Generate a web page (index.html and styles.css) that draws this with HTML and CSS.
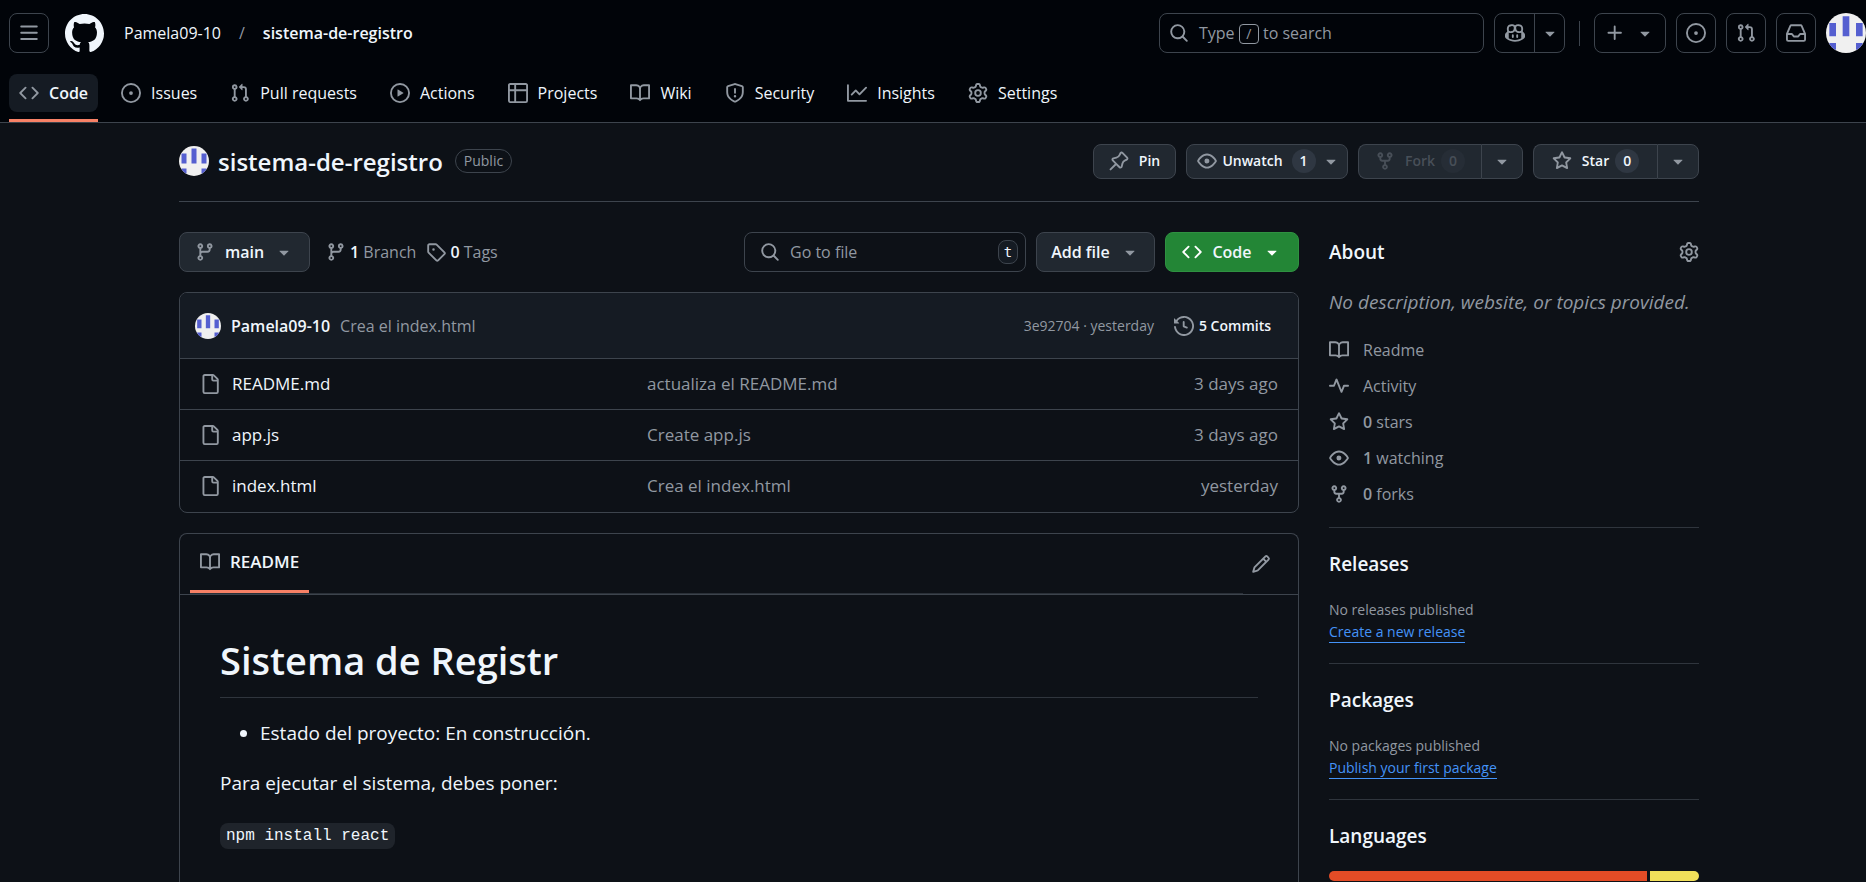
FILE: index.html
```html
<!DOCTYPE html>
<html lang="en">
<head>
<meta charset="utf-8">
<title>Pamela09-10/sistema-de-registro</title>
<link rel="stylesheet" href="styles.css">
</head>
<body>
<svg class="sprite" aria-hidden="true">
  <symbol id="bars" viewBox="0 0 16 16"><path d="M1 2.75A.75.75 0 0 1 1.75 2h12.5a.75.75 0 0 1 0 1.5H1.75A.75.75 0 0 1 1 2.75Zm0 5A.75.75 0 0 1 1.75 7h12.5a.75.75 0 0 1 0 1.5H1.75A.75.75 0 0 1 1 7.75ZM1.75 12h12.5a.75.75 0 0 1 0 1.5H1.75a.75.75 0 0 1 0-1.5Z"/></symbol>
  <symbol id="mark" viewBox="0 0 16 16"><path d="M8 0c4.42 0 8 3.58 8 8a8.013 8.013 0 0 1-5.45 7.59c-.4.08-.55-.17-.55-.38 0-.27.01-1.13.01-2.2 0-.75-.25-1.23-.54-1.48 1.78-.2 3.65-.88 3.65-3.95 0-.88-.31-1.59-.82-2.15.08-.2.36-1.02-.08-2.12 0 0-.67-.22-2.2.82-.64-.18-1.32-.27-2-.27-.68 0-1.36.09-2 .27-1.53-1.03-2.2-.82-2.2-.82-.44 1.1-.16 1.92-.08 2.12-.51.56-.82 1.28-.82 2.15 0 3.06 1.86 3.75 3.64 3.95-.23.2-.44.55-.51 1.07-.46.21-1.61.55-2.33-.66-.15-.24-.6-.83-1.23-.82-.67.01-.27.38.01.53.34.19.73.9.82 1.13.16.45.68 1.31 2.69.94 0 .67.01 1.3.01 1.49 0 .21-.15.45-.55.38A7.995 7.995 0 0 1 0 8c0-4.42 3.58-8 8-8Z"/></symbol>
  <symbol id="code" viewBox="0 0 16 16"><path d="m11.28 3.22 4.25 4.25a.75.75 0 0 1 0 1.06l-4.25 4.25a.749.749 0 0 1-1.275-.326.749.749 0 0 1 .215-.734L13.94 8l-3.72-3.72a.749.749 0 0 1 .326-1.275.749.749 0 0 1 .734.215Zm-6.56 0a.751.751 0 0 1 1.042.018.751.751 0 0 1 .018 1.042L2.06 8l3.72 3.72a.749.749 0 0 1-.326 1.275.749.749 0 0 1-.734-.215L.47 8.53a.75.75 0 0 1 0-1.06Z"/></symbol>
  <symbol id="issue" viewBox="0 0 16 16"><path d="M8 9.5a1.5 1.5 0 1 0 0-3 1.5 1.5 0 0 0 0 3Z"/><path d="M8 0a8 8 0 1 1 0 16A8 8 0 0 1 8 0ZM1.5 8a6.5 6.5 0 1 0 13 0 6.5 6.5 0 0 0-13 0Z"/></symbol>
  <symbol id="pull" viewBox="0 0 16 16"><path d="M1.5 3.25a2.25 2.25 0 1 1 3 2.122v5.256a2.251 2.251 0 1 1-1.5 0V5.372A2.25 2.25 0 0 1 1.5 3.25Zm5.677-.177L9.573.677A.25.25 0 0 1 10 .854V2.5h1A2.5 2.5 0 0 1 13.5 5v5.628a2.251 2.251 0 1 1-1.5 0V5a1 1 0 0 0-1-1h-1v1.646a.25.25 0 0 1-.427.177L7.177 3.427a.25.25 0 0 1 0-.354ZM3.75 2.5a.75.75 0 1 0 0 1.5.75.75 0 0 0 0-1.5Zm0 9.5a.75.75 0 1 0 0 1.5.75.75 0 0 0 0-1.5Zm8.25.75a.75.75 0 1 0 1.5 0 .75.75 0 0 0-1.5 0Z"/></symbol>
  <symbol id="play" viewBox="0 0 16 16"><path d="M8 0a8 8 0 1 1 0 16A8 8 0 0 1 8 0ZM1.5 8a6.5 6.5 0 1 0 13 0 6.5 6.5 0 0 0-13 0Zm4.879-2.773 4.264 2.559a.25.25 0 0 1 0 .428l-4.264 2.559A.25.25 0 0 1 6 10.559V5.442a.25.25 0 0 1 .379-.215Z"/></symbol>
  <symbol id="table" viewBox="0 0 16 16"><path d="M0 1.75C0 .784.784 0 1.75 0h12.5C15.216 0 16 .784 16 1.75v12.5A1.75 1.75 0 0 1 14.25 16H1.75A1.75 1.75 0 0 1 0 14.25ZM6.5 6.5v8h7.75a.25.25 0 0 0 .25-.25V6.5Zm8-1.5V1.75a.25.25 0 0 0-.25-.25H6.5V5Zm-13 1.5v7.75c0 .138.112.25.25.25H5v-8ZM5 5V1.5H1.75a.25.25 0 0 0-.25.25V5Z"/></symbol>
  <symbol id="book" viewBox="0 0 16 16"><path d="M0 1.75A.75.75 0 0 1 .75 1h4.253c1.227 0 2.317.59 3 1.501A3.743 3.743 0 0 1 11.006 1h4.245a.75.75 0 0 1 .75.75v10.5a.75.75 0 0 1-.75.75h-4.507a2.25 2.25 0 0 0-1.591.659l-.622.621a.75.75 0 0 1-1.06 0l-.622-.621A2.25 2.25 0 0 0 5.258 13H.75a.75.75 0 0 1-.75-.75Zm7.251 10.324.004-5.073-.002-2.253A2.25 2.25 0 0 0 5.003 2.5H1.5v9h3.757a3.75 3.75 0 0 1 1.994.574ZM8.755 4.75l-.004 7.322a3.752 3.752 0 0 1 1.992-.572H14.5v-9h-3.495a2.25 2.25 0 0 0-2.25 2.25Z"/></symbol>
  <symbol id="shield" viewBox="0 0 16 16"><path d="M7.467.133a1.748 1.748 0 0 1 1.066 0l5.25 1.68A1.75 1.75 0 0 1 15 3.48V7c0 1.566-.32 3.182-1.303 4.682-.983 1.498-2.585 2.813-5.032 3.855a1.697 1.697 0 0 1-1.33 0c-2.447-1.042-4.049-2.357-5.032-3.855C1.32 10.182 1 8.566 1 7V3.48a1.75 1.75 0 0 1 1.217-1.667Zm.61 1.429a.25.25 0 0 0-.153 0l-5.25 1.68a.25.25 0 0 0-.174.238V7c0 1.358.275 2.666 1.057 3.86.784 1.194 2.121 2.34 4.366 3.297a.196.196 0 0 0 .154 0c2.245-.956 3.582-2.104 4.366-3.298C13.225 9.666 13.5 8.36 13.5 7V3.48a.251.251 0 0 0-.174-.237l-5.25-1.68ZM8.75 4.75v3a.75.75 0 0 1-1.5 0v-3a.75.75 0 0 1 1.5 0ZM9 10.5a1 1 0 1 1-2 0 1 1 0 0 1 2 0Z"/></symbol>
  <symbol id="graph" viewBox="0 0 16 16"><path d="M1.5 1.75V13.5h13.75a.75.75 0 0 1 0 1.5H.75a.75.75 0 0 1-.75-.75V1.75a.75.75 0 0 1 1.5 0Zm14.28 2.53-5.25 5.25a.75.75 0 0 1-1.06 0L7 7.06 4.28 9.78a.751.751 0 0 1-1.042-.018.751.751 0 0 1-.018-1.042l3.25-3.25a.75.75 0 0 1 1.06 0L10 7.94l4.72-4.72a.751.751 0 0 1 1.042.018.751.751 0 0 1 .018 1.042Z"/></symbol>
  <symbol id="gear" viewBox="0 0 16 16"><path d="M8 0a8.2 8.2 0 0 1 .701.031C9.444.095 9.99.645 10.16 1.29l.288 1.107c.018.066.079.158.212.224.231.114.454.243.668.386.123.082.233.09.299.071l1.103-.303c.644-.176 1.392.021 1.82.63.27.385.506.792.704 1.218.315.675.111 1.422-.364 1.891l-.814.806c-.049.048-.098.147-.088.294.016.257.016.515 0 .772-.01.147.038.246.088.294l.814.806c.475.469.679 1.216.364 1.891a7.977 7.977 0 0 1-.704 1.217c-.428.61-1.176.807-1.82.63l-1.102-.302c-.067-.019-.177-.011-.3.071a5.909 5.909 0 0 1-.668.386c-.133.066-.194.158-.211.224l-.29 1.106c-.168.646-.715 1.196-1.458 1.26a8.006 8.006 0 0 1-1.402 0c-.743-.064-1.289-.614-1.458-1.26l-.289-1.106c-.018-.066-.079-.158-.212-.224a5.738 5.738 0 0 1-.668-.386c-.123-.082-.233-.09-.299-.071l-1.103.303c-.644.176-1.392-.021-1.82-.63a8.12 8.12 0 0 1-.704-1.218c-.315-.675-.111-1.422.363-1.891l.815-.806c.05-.048.098-.147.088-.294a6.214 6.214 0 0 1 0-.772c.01-.147-.038-.246-.088-.294l-.815-.806C.635 6.045.431 5.298.746 4.623a7.92 7.92 0 0 1 .704-1.217c.428-.61 1.176-.807 1.82-.63l1.102.302c.067.019.177.011.3-.071.214-.143.437-.272.668-.386.133-.066.194-.158.211-.224l.29-1.106C6.009.645 6.556.095 7.299.03 7.53.01 7.764 0 8 0Zm-.571 1.525c-.036.003-.108.036-.137.146l-.289 1.105c-.147.561-.549.967-.998 1.189-.173.086-.34.183-.5.29-.417.278-.97.423-1.529.27l-1.103-.303c-.109-.03-.175.016-.195.045-.22.312-.412.644-.573.99-.014.031-.021.11.059.19l.815.806c.411.406.562.957.53 1.456a4.709 4.709 0 0 0 0 .582c.032.499-.119 1.05-.53 1.456l-.815.806c-.081.08-.073.159-.059.19.162.346.353.677.573.989.02.03.085.076.195.046l1.102-.303c.56-.153 1.113-.008 1.53.27.161.107.328.204.501.29.447.222.85.629.997 1.189l.289 1.105c.029.109.101.143.137.146a6.6 6.6 0 0 0 1.142 0c.036-.003.108-.036.137-.146l.289-1.105c.147-.561.549-.967.998-1.189.173-.086.34-.183.5-.29.417-.278.97-.423 1.529-.27l1.103.303c.109.029.175-.016.195-.045.22-.313.411-.644.573-.99.014-.031.021-.11-.059-.19l-.815-.806c-.411-.406-.562-.957-.53-1.456a4.709 4.709 0 0 0 0-.582c-.032-.499.119-1.05.53-1.456l.815-.806c.081-.08.073-.159.059-.19a6.464 6.464 0 0 0-.573-.989c-.02-.03-.085-.076-.195-.046l-1.102.303c-.56.153-1.113.008-1.53-.27a4.44 4.44 0 0 0-.501-.29c-.447-.222-.85-.629-.997-1.189l-.289-1.105c-.029-.11-.101-.143-.137-.146a6.6 6.6 0 0 0-1.142 0ZM11 8a3 3 0 1 1-6 0 3 3 0 0 1 6 0ZM9.5 8a1.5 1.5 0 1 0-3.001.001A1.5 1.5 0 0 0 9.5 8Z"/></symbol>
  <symbol id="search" viewBox="0 0 16 16"><path d="M10.68 11.74a6 6 0 0 1-7.922-8.982 6 6 0 0 1 8.982 7.922l3.04 3.04a.749.749 0 0 1-.326 1.275.749.749 0 0 1-.734-.215ZM11.5 7a4.499 4.499 0 1 0-8.997 0A4.499 4.499 0 0 0 11.5 7Z"/></symbol>
  <symbol id="copilot" viewBox="0 0 16 16"><path d="M7.998 15.035c-4.562 0-7.873-2.914-7.998-3.749V9.338c.085-.628.677-1.686 1.588-2.065.013-.07.024-.143.036-.218.029-.183.06-.384.126-.612-.201-.508-.254-1.084-.254-1.656 0-.87.128-1.769.693-2.484.579-.733 1.494-1.124 2.724-1.261 1.206-.134 2.262.034 2.944.765.05.053.096.108.139.165.044-.057.094-.112.143-.165.682-.731 1.738-.899 2.944-.765 1.23.137 2.145.528 2.724 1.261.566.715.693 1.614.693 2.484 0 .572-.053 1.148-.254 1.656.066.228.098.429.126.612.012.076.024.148.037.218.924.385 1.522 1.471 1.591 2.095v1.872c0 .766-3.351 3.795-8.002 3.795Zm0-1.485c2.28 0 4.584-1.11 5.002-1.433V7.862l-.023-.116c-.49.21-1.075.291-1.727.291-1.146 0-2.059-.327-2.71-.991A3.222 3.222 0 0 1 8 6.303a3.24 3.24 0 0 1-.544.743c-.65.664-1.563.991-2.71.991-.652 0-1.236-.081-1.727-.291l-.023.116v4.255c.419.323 2.722 1.433 5.002 1.433ZM6.762 2.83c-.193-.206-.637-.413-1.682-.297-1.019.113-1.479.404-1.713.7-.247.312-.369.789-.369 1.554 0 .793.129 1.171.308 1.371.162.181.519.379 1.442.379.853 0 1.339-.235 1.638-.54.315-.322.527-.827.617-1.553.117-.935-.037-1.395-.241-1.614Zm4.155-.297c-1.044-.116-1.488.091-1.681.297-.204.219-.359.679-.242 1.614.091.726.303 1.231.618 1.553.299.305.784.54 1.638.54.922 0 1.28-.198 1.442-.379.179-.2.308-.578.308-1.371 0-.765-.123-1.242-.37-1.554-.233-.296-.693-.587-1.713-.7Z"/><path d="M6.25 9.037a.75.75 0 0 1 .75.75v1.501a.75.75 0 0 1-1.5 0V9.787a.75.75 0 0 1 .75-.75Zm4.25.75v1.501a.75.75 0 0 1-1.5 0V9.787a.75.75 0 0 1 1.5 0Z"/></symbol>
  <symbol id="down" viewBox="0 0 16 16"><path d="m4.427 7.427 3.396 3.396a.25.25 0 0 0 .354 0l3.396-3.396A.25.25 0 0 0 11.396 7H4.604a.25.25 0 0 0-.177.427Z"/></symbol>
  <symbol id="plus" viewBox="0 0 16 16"><path d="M7.75 2a.75.75 0 0 1 .75.75V7h4.25a.75.75 0 0 1 0 1.5H8.5v4.25a.75.75 0 0 1-1.5 0V8.5H2.75a.75.75 0 0 1 0-1.5H7V2.75A.75.75 0 0 1 7.75 2Z"/></symbol>
  <symbol id="inbox" viewBox="0 0 16 16"><path d="M2.8 2.06A1.75 1.75 0 0 1 4.41 1h7.18c.7 0 1.333.417 1.61 1.06l2.74 6.395c.04.093.06.194.06.295v4.5A1.75 1.75 0 0 1 14.25 15H1.75A1.75 1.75 0 0 1 0 13.25v-4.5c0-.101.02-.202.06-.295Zm1.61.44a.25.25 0 0 0-.23.152L1.887 8H4.75a.75.75 0 0 1 .6.3L6.625 10h2.75l1.275-1.7a.75.75 0 0 1 .6-.3h2.863L11.82 2.652a.25.25 0 0 0-.23-.152Zm10.09 7h-2.875l-1.275 1.7a.75.75 0 0 1-.6.3h-3.5a.75.75 0 0 1-.6-.3L4.375 9.5H1.5v3.75c0 .138.112.25.25.25h12.5a.25.25 0 0 0 .25-.25Z"/></symbol>
  <symbol id="pin" viewBox="0 0 16 16"><path d="m11.294.984 3.722 3.722a1.75 1.75 0 0 1-.504 2.826l-1.327.613a3.089 3.089 0 0 0-1.707 2.084l-.584 2.454c-.317 1.332-1.972 1.8-2.94.832L5.75 11.311 1.78 15.28a.749.749 0 1 1-1.06-1.06l3.969-3.97-2.204-2.204c-.968-.968-.5-2.623.832-2.94l2.454-.584a3.08 3.08 0 0 0 2.084-1.707l.613-1.327a1.75 1.75 0 0 1 2.826-.504ZM6.283 9.723l2.732 2.731a.25.25 0 0 0 .42-.119l.584-2.454a4.586 4.586 0 0 1 2.537-3.098l1.328-.613a.25.25 0 0 0 .072-.404l-3.722-3.722a.25.25 0 0 0-.404.072l-.613 1.328a4.584 4.584 0 0 1-3.098 2.537l-2.454.584a.25.25 0 0 0-.119.42l2.731 2.732Z"/></symbol>
  <symbol id="eye" viewBox="0 0 16 16"><path d="M8 2c1.981 0 3.671.992 4.933 2.078 1.27 1.091 2.187 2.345 2.637 3.023a1.62 1.62 0 0 1 0 1.798c-.45.678-1.367 1.932-2.637 3.023C11.67 13.008 9.981 14 8 14c-1.981 0-3.671-.992-4.933-2.078C1.797 10.83.88 9.576.43 8.898a1.62 1.62 0 0 1 0-1.798c.45-.677 1.367-1.931 2.637-3.022C4.33 2.992 6.019 2 8 2ZM1.679 7.932a.12.12 0 0 0 0 .136c.411.622 1.241 1.75 2.366 2.717C5.176 11.758 6.527 12.5 8 12.5c1.473 0 2.825-.742 3.955-1.715 1.124-.967 1.954-2.096 2.366-2.717a.12.12 0 0 0 0-.136c-.412-.621-1.242-1.75-2.366-2.717C10.824 4.242 9.473 3.5 8 3.5c-1.473 0-2.825.742-3.955 1.715-1.124.967-1.954 2.096-2.366 2.717ZM8 10a2 2 0 1 1-.001-3.999A2 2 0 0 1 8 10Z"/></symbol>
  <symbol id="fork" viewBox="0 0 16 16"><path d="M5 5.372v.878c0 .414.336.75.75.75h4.5a.75.75 0 0 0 .75-.75v-.878a2.25 2.25 0 1 1 1.5 0v.878a2.25 2.25 0 0 1-2.25 2.25h-1.5v2.128a2.251 2.251 0 1 1-1.5 0V8.5h-1.5A2.25 2.25 0 0 1 3.5 6.25v-.878a2.25 2.25 0 1 1 1.5 0ZM5 3.25a.75.75 0 1 0-1.5 0 .75.75 0 0 0 1.5 0Zm6.75.75a.75.75 0 1 0 0-1.5.75.75 0 0 0 0 1.5Zm-3 8.75a.75.75 0 1 0-1.5 0 .75.75 0 0 0 1.5 0Z"/></symbol>
  <symbol id="star" viewBox="0 0 16 16"><path d="M8 .25a.75.75 0 0 1 .673.418l1.882 3.815 4.21.612a.75.75 0 0 1 .416 1.279l-3.046 2.97.719 4.192a.751.751 0 0 1-1.088.791L8 12.347l-3.766 1.98a.75.75 0 0 1-1.088-.79l.72-4.194L.818 6.374a.75.75 0 0 1 .416-1.28l4.21-.611L7.327.668A.75.75 0 0 1 8 .25Zm0 2.445L6.615 5.5a.75.75 0 0 1-.564.41l-3.097.45 2.24 2.184a.75.75 0 0 1 .216.664l-.528 3.084 2.769-1.456a.75.75 0 0 1 .698 0l2.77 1.456-.53-3.084a.75.75 0 0 1 .216-.664l2.24-2.183-3.096-.45a.75.75 0 0 1-.564-.41L8 2.694Z"/></symbol>
  <symbol id="branch" viewBox="0 0 16 16"><path d="M9.5 3.25a2.25 2.25 0 1 1 3 2.122V6A2.5 2.5 0 0 1 10 8.5H6a1 1 0 0 0-1 1v1.128a2.251 2.251 0 1 1-1.5 0V5.372a2.25 2.25 0 1 1 1.5 0v1.836A2.493 2.493 0 0 1 6 7h4a1 1 0 0 0 1-1v-.628A2.25 2.25 0 0 1 9.5 3.25Zm-6 0a.75.75 0 1 0 1.5 0 .75.75 0 0 0-1.5 0Zm8.25-.75a.75.75 0 1 0 0 1.5.75.75 0 0 0 0-1.5ZM4.25 12a.75.75 0 1 0 0 1.5.75.75 0 0 0 0-1.5Z"/></symbol>
  <symbol id="tag" viewBox="0 0 16 16"><path d="M1 7.775V2.75C1 1.784 1.784 1 2.75 1h5.025c.464 0 .91.184 1.238.513l6.25 6.25a1.75 1.75 0 0 1 0 2.474l-5.026 5.026a1.75 1.75 0 0 1-2.474 0l-6.25-6.25A1.752 1.752 0 0 1 1 7.775Zm1.5 0c0 .066.026.13.073.177l6.25 6.25a.25.25 0 0 0 .354 0l5.025-5.025a.25.25 0 0 0 0-.354l-6.25-6.25a.25.25 0 0 0-.177-.073H2.75a.25.25 0 0 0-.25.25ZM6 5a1 1 0 1 1 0 2 1 1 0 0 1 0-2Z"/></symbol>
  <symbol id="history" viewBox="0 0 16 16"><path d="m.427 1.927 1.215 1.215a8.002 8.002 0 1 1-1.6 5.685.75.75 0 1 1 1.493-.154 6.5 6.5 0 1 0 1.18-4.458l1.358 1.358A.25.25 0 0 1 3.896 6H.25A.25.25 0 0 1 0 5.75V2.104a.25.25 0 0 1 .427-.177ZM7.75 4a.75.75 0 0 1 .75.75v2.992l2.028.812a.75.75 0 0 1-.557 1.392l-2.5-1A.751.751 0 0 1 7 8.25v-3.5A.75.75 0 0 1 7.75 4Z"/></symbol>
  <symbol id="file" viewBox="0 0 16 16"><path d="M2 1.75C2 .784 2.784 0 3.75 0h6.586c.464 0 .909.184 1.237.513l2.914 2.914c.329.328.513.773.513 1.237v9.586A1.75 1.75 0 0 1 13.25 16h-9.5A1.75 1.75 0 0 1 2 14.25Zm1.75-.25a.25.25 0 0 0-.25.25v12.5c0 .138.112.25.25.25h9.5a.25.25 0 0 0 .25-.25V6h-2.75A1.75 1.75 0 0 1 9 4.25V1.5Zm6.75.062V4.25c0 .138.112.25.25.25h2.688l-.011-.013-2.914-2.914-.013-.011Z"/></symbol>
  <symbol id="pencil" viewBox="0 0 16 16"><path d="M11.013 1.427a1.75 1.75 0 0 1 2.474 0l1.086 1.086a1.75 1.75 0 0 1 0 2.474l-8.61 8.61c-.21.21-.47.364-.756.445l-3.251.93a.75.75 0 0 1-.927-.928l.929-3.25c.081-.286.235-.547.445-.758l8.61-8.61Zm.176 4.823L9.75 4.81l-6.286 6.287a.253.253 0 0 0-.064.108l-.558 1.953 1.953-.558a.253.253 0 0 0 .108-.064Zm1.238-3.763a.25.25 0 0 0-.354 0L10.811 3.75l1.439 1.44 1.263-1.263a.25.25 0 0 0 0-.354Z"/></symbol>
  <symbol id="pulse" viewBox="0 0 16 16"><path d="M6 2c.306 0 .582.187.696.471L10 10.731l1.304-3.26A.751.751 0 0 1 12 7h3.25a.75.75 0 0 1 0 1.5h-2.742l-1.812 4.528a.751.751 0 0 1-1.392 0L6 4.77 4.696 8.03A.75.75 0 0 1 4 8.5H.75a.75.75 0 0 1 0-1.5h2.742l1.812-4.529A.751.751 0 0 1 6 2Z"/></symbol>
  <symbol id="avatar" viewBox="0 0 12 12"><path fill="#f0f0f0" d="M0 0h12v12H0z"/><path fill="#555fd0" d="M1 3h2v4H1zM5 1h2v6H5zM9 3h2v4H9zM1 9h2v2H1zM9 9h2v2H9z"/></symbol>
</svg>

<header class="site-header">
  <div class="topbar">
    <button class="icon-button" aria-label="Open menu"><svg class="icon"><use href="#bars"/></svg></button>
    <a class="logo" href="#" aria-label="Homepage"><svg><use href="#mark"/></svg></a>
    <nav class="crumbs" aria-label="Breadcrumb">
      <a href="#">Pamela09-10</a><span class="slash">/</span><a class="current" href="#">sistema-de-registro</a>
    </nav>
    <div class="tools">
      <button class="search"><svg class="icon"><use href="#search"/></svg><span>Type <kbd>/</kbd> to search</span></button>
      <div class="split">
        <button aria-label="Copilot"><svg class="icon"><use href="#copilot"/></svg></button>
        <button class="narrow" aria-label="Copilot options"><svg class="icon"><use href="#down"/></svg></button>
      </div>
      <span class="divider"></span>
      <button class="icon-button create" aria-label="Create new"><svg class="icon"><use href="#plus"/></svg><svg class="icon"><use href="#down"/></svg></button>
      <button class="icon-button" aria-label="Issues"><svg class="icon"><use href="#issue"/></svg></button>
      <button class="icon-button" aria-label="Pull requests"><svg class="icon"><use href="#pull"/></svg></button>
      <button class="icon-button" aria-label="Notifications"><svg class="icon"><use href="#inbox"/></svg></button>
      <button class="profile" aria-label="Account"><svg class="avatar"><use href="#avatar"/></svg></button>
    </div>
  </div>
  <nav class="tabs" aria-label="Repository">
    <a class="tab active" href="#"><svg class="icon"><use href="#code"/></svg>Code</a>
    <a class="tab" href="#"><svg class="icon"><use href="#issue"/></svg>Issues</a>
    <a class="tab" href="#"><svg class="icon"><use href="#pull"/></svg>Pull requests</a>
    <a class="tab" href="#"><svg class="icon"><use href="#play"/></svg>Actions</a>
    <a class="tab" href="#"><svg class="icon"><use href="#table"/></svg>Projects</a>
    <a class="tab" href="#"><svg class="icon"><use href="#book"/></svg>Wiki</a>
    <a class="tab" href="#"><svg class="icon"><use href="#shield"/></svg>Security</a>
    <a class="tab" href="#"><svg class="icon"><use href="#graph"/></svg>Insights</a>
    <a class="tab" href="#"><svg class="icon"><use href="#gear"/></svg>Settings</a>
  </nav>
</header>

<main class="page">
  <div class="repo-head">
    <svg class="avatar medium"><use href="#avatar"/></svg>
    <h1 class="repo-title"><a href="#">sistema-de-registro</a></h1>
    <span class="badge">Public</span>
    <div class="actions">
      <button class="btn small pin"><svg class="icon"><use href="#pin"/></svg>Pin</button>
      <button class="btn small watch"><svg class="icon"><use href="#eye"/></svg>Unwatch<span class="count">1</span><svg class="icon caret"><use href="#down"/></svg></button>
      <div class="group fork">
        <button class="btn small" disabled><svg class="icon"><use href="#fork"/></svg>Fork<span class="count">0</span></button>
        <button class="btn small more" aria-label="Fork options"><svg class="icon"><use href="#down"/></svg></button>
      </div>
      <div class="group">
        <button class="btn small"><svg class="icon"><use href="#star"/></svg>Star<span class="count">0</span></button>
        <button class="btn small more" aria-label="Star options"><svg class="icon"><use href="#down"/></svg></button>
      </div>
    </div>
  </div>

  <div class="columns">
    <div class="content">
      <div class="toolbar">
        <button class="btn ref"><svg class="icon"><use href="#branch"/></svg>main<svg class="icon"><use href="#down"/></svg></button>
        <a class="stat" href="#"><svg class="icon"><use href="#branch"/></svg><span><strong>1</strong> Branch</span></a>
        <a class="stat" href="#"><svg class="icon"><use href="#tag"/></svg><span><strong>0</strong> Tags</span></a>
        <label class="finder">
          <svg class="icon"><use href="#search"/></svg>
          <input type="text" placeholder="Go to file" aria-label="Go to file">
          <kbd>t</kbd>
        </label>
        <button class="btn add">Add file<svg class="icon"><use href="#down"/></svg></button>
        <button class="btn primary"><svg class="icon"><use href="#code"/></svg>Code<svg class="icon"><use href="#down"/></svg></button>
      </div>

      <section class="box">
        <div class="commit">
          <svg class="avatar tiny"><use href="#avatar"/></svg>
          <a class="author" href="#">Pamela09-10</a>
          <a class="message" href="#">Crea el index.html</a>
          <span class="hash">3e92704 · yesterday</span>
          <a class="commits" href="#"><svg class="icon"><use href="#history"/></svg>5 Commits</a>
        </div>
        <table class="files">
          <tbody>
            <tr><td class="name"><a href="#"><svg class="icon"><use href="#file"/></svg>README.md</a></td><td>actualiza el README.md</td><td class="date">3 days ago</td></tr>
            <tr><td class="name"><a href="#"><svg class="icon"><use href="#file"/></svg>app.js</a></td><td>Create app.js</td><td class="date">3 days ago</td></tr>
            <tr><td class="name"><a href="#"><svg class="icon"><use href="#file"/></svg>index.html</a></td><td>Crea el index.html</td><td class="date">yesterday</td></tr>
          </tbody>
        </table>
      </section>

      <section class="box readme">
        <div class="readme-bar">
          <nav class="readme-tabs"><a class="readme-tab" href="#"><svg class="icon"><use href="#book"/></svg>README</a></nav>
          <button class="edit" aria-label="Edit file"><svg class="icon"><use href="#pencil"/></svg></button>
        </div>
        <article class="markdown">
          <h2>Sistema de Registr</h2>
          <ul><li>Estado del proyecto: En construcción.</li></ul>
          <p>Para ejecutar el sistema, debes poner:</p>
          <p><code>npm install react</code></p>
        </article>
      </section>
    </div>

    <aside class="sidebar">
      <section class="about">
        <div class="about-head"><h2>About</h2><button class="plain" aria-label="Edit repository metadata"><svg class="icon"><use href="#gear"/></svg></button></div>
        <p class="description">No description, website, or topics provided.</p>
        <ul class="facts">
          <li><a href="#"><svg class="icon"><use href="#book"/></svg>Readme</a></li>
          <li><a href="#"><svg class="icon"><use href="#pulse"/></svg>Activity</a></li>
          <li><a href="#"><svg class="icon"><use href="#star"/></svg><span><strong>0</strong> stars</span></a></li>
          <li><a href="#"><svg class="icon"><use href="#eye"/></svg><span><strong>1</strong> watching</span></a></li>
          <li><a href="#"><svg class="icon"><use href="#fork"/></svg><span><strong>0</strong> forks</span></a></li>
        </ul>
      </section>
      <section class="block">
        <h2>Releases</h2>
        <p>No releases published</p>
        <a class="link" href="#">Create a new release</a>
      </section>
      <section class="block">
        <h2>Packages</h2>
        <p>No packages published</p>
        <a class="link" href="#">Publish your first package</a>
      </section>
      <section class="block">
        <h2>Languages</h2>
        <div class="languages"><span class="html" style="width:86%"></span><span class="js"></span></div>
      </section>
    </aside>
  </div>
</main>
</body>
</html>
```

FILE: styles.css
```css
* { box-sizing: border-box; }
html { background: #0d1117; }
body {
  margin: 0;
  height: 100vh;
  overflow: hidden;
  background: #0d1117;
  color: #f0f6fc;
  font: 16px/26px "Open Sans", "Noto Sans", sans-serif;
}
a { color: inherit; text-decoration: none; }
button {
  display: inline-flex;
  align-items: center;
  justify-content: center;
  margin: 0;
  padding: 0;
  border: 0;
  background: none;
  color: inherit;
  font: inherit;
  cursor: pointer;
}
h1, h2, p, ul { margin: 0; }
ul { padding: 0; }
strong { font-weight: 600; }
.sprite { position: absolute; width: 0; height: 0; }
.icon { flex: none; width: 20px; height: 20px; fill: #9198a1; }
.avatar { flex: none; display: block; width: 40px; height: 40px; border-radius: 50%; }
.avatar.medium { width: 30px; height: 30px; }
.avatar.tiny { width: 26px; height: 26px; }

/* Header */
.site-header { background: #010409; border-bottom: 1px solid #3d444d; }
.topbar { display: flex; align-items: center; padding: 13px 0 13px 9px; }
.icon-button { width: 40px; height: 40px; border: 1px solid #3d444d; border-radius: 8px; }
.logo { margin-left: 16px; }
.logo svg { display: block; width: 39px; height: 39px; fill: #f0f6fc; }
.crumbs { display: flex; margin-left: 20px; white-space: nowrap; }
.slash { margin: 0 18px; color: #9198a1; }
.current { font-weight: 600; }
.tools { display: flex; align-items: center; gap: 10px; margin-left: auto; }
.search {
  width: 325px;
  height: 40px;
  justify-content: flex-start;
  gap: 10px;
  padding: 0 9px;
  border: 1px solid #3d444d;
  border-radius: 8px;
  color: #9198a1;
}
.search kbd {
  display: inline-block;
  width: 20px;
  border: 1px solid #9198a1;
  border-radius: 4px;
  font: 14px/18px "Open Sans", sans-serif;
}
.split { display: flex; height: 40px; border: 1px solid #3d444d; border-radius: 8px; }
.split button { width: 39px; }
.split .narrow { width: 30px; border-left: 1px solid #3d444d; }
.divider { width: 1px; height: 25px; margin: 0 4px; background: #3d444d; }
.create { width: 72px; gap: 10px; }
.tabs { display: flex; gap: 13px; padding: 8px 9px 0; }
.tab {
  display: flex;
  align-items: center;
  gap: 10px;
  height: 38px;
  margin-bottom: 10px;
  padding: 0 10px;
  border-radius: 8px;
  white-space: nowrap;
}
.tab.active { position: relative; background: #151b23; font-weight: 600; }
.tab.active::after {
  content: "";
  position: absolute;
  left: 0;
  right: 0;
  bottom: -10px;
  height: 3px;
  background: #f78166;
}

/* Repository heading */
.page { max-width: 1600px; margin: 0 auto; padding: 0 34px 0 46px; }
.repo-head {
  display: flex;
  align-items: center;
  padding: 20px 0 22px;
  border-bottom: 1px solid #3d444d;
}
.repo-title { margin-left: 9px; padding-top: 2px; font-size: 24px; line-height: 34px; font-weight: 600; }
.badge {
  margin-left: 12px;
  padding: 0 8px;
  border: 1px solid #3d444d;
  border-radius: 12px;
  color: #9198a1;
  font-size: 14px;
  line-height: 22px;
}
.actions { display: flex; gap: 10px; margin-left: auto; }
.btn {
  height: 40px;
  gap: 10px;
  padding: 0 15px;
  border: 1px solid #3d444d;
  border-radius: 8px;
  background: #212830;
  font-weight: 600;
  white-space: nowrap;
}
.btn.small { height: 35px; padding: 0 14px; font-size: 14px; }
.pin { width: 83px; }
.btn.watch { width: 162px; padding: 0 4px 0 8px; gap: 5px; }
.count {
  min-width: 24px;
  height: 24px;
  border-radius: 12px;
  background: #2f3742;
  line-height: 24px;
  text-align: center;
}
.watch .count { margin-left: 4px; }
.group { display: flex; }
.group .btn:first-child { width: 124px; padding: 0; border-radius: 8px 0 0 8px; }
.group.fork .btn:first-child { width: 123px; }
.group .btn:first-child { border-right: 0; }
.group .btn .count { margin-left: -4px; }
.group .more { width: 42px; padding: 0; border-radius: 0 8px 8px 0; }
.group.fork .count { background: #262d36; }
.btn:disabled { color: #484f58; }
.btn:disabled .icon { fill: #484f58; }

/* Columns */
.columns { display: grid; grid-template-columns: minmax(0, 1fr) 370px; gap: 30px; padding-top: 30px; }
.toolbar { display: flex; align-items: center; gap: 10px; margin-bottom: 20px; white-space: nowrap; }
.ref { width: 131px; margin-right: 6px; }
.stat { display: flex; align-items: center; gap: 4px; color: #9198a1; }
.stat strong { color: #f0f6fc; }
.finder {
  display: flex;
  align-items: center;
  gap: 10px;
  width: 282px;
  height: 40px;
  margin-left: auto;
  padding: 0 7px 0 15px;
  border: 1px solid #3d444d;
  border-radius: 8px;
}
.finder input {
  flex: 1;
  min-width: 0;
  padding: 0;
  border: 0;
  outline: 0;
  background: none;
  color: #f0f6fc;
  font: inherit;
}
.finder input::placeholder { color: #9198a1; opacity: 1; }
.finder kbd {
  width: 20px;
  border: 1px solid #3d444d;
  border-radius: 8px;
  background: #151b23;
  font: 14px/22px "DejaVu Sans Mono", monospace;
  text-align: center;
}
.add { width: 119px; }
.primary { width: 134px; border-color: #2f9141; background: #238636; }
.primary .icon { fill: #ffffff; }

/* File list */
.box { border: 1px solid #3d444d; border-radius: 8px; overflow: hidden; }
.commit { display: flex; align-items: center; height: 65px; padding: 0 27px 0 15px; background: #151b23; }
.author { margin-left: 10px; font-weight: 600; }
.message { margin-left: 10px; color: #9198a1; }
.hash { margin-left: auto; color: #9198a1; font-size: 14px; }
.commits { display: flex; align-items: center; gap: 5px; margin-left: 20px; font-size: 14px; font-weight: 600; }
.files { width: 100%; border-collapse: collapse; table-layout: fixed; font-size: 17px; }
.files td { height: 51px; padding: 0; border-top: 1px solid #3d444d; color: #9198a1; }
.files .name { width: 467px; padding-left: 20px; color: #f0f6fc; }
.files .name a { display: flex; align-items: center; gap: 12px; }
.files .date { width: 160px; padding-right: 20px; text-align: right; }

/* Readme */
.readme { margin-top: 20px; border-bottom: 0; border-radius: 8px 8px 0 0; }
.readme-bar { display: flex; align-items: center; height: 61px; padding-left: 10px; border-bottom: 1px solid #3d444d; }
.readme-tabs { display: flex; flex: 1; height: 60px; border-bottom: 1px solid #2a3038; }
.readme-tab {
  display: flex;
  align-items: center;
  gap: 10px;
  padding: 0 10px;
  border-bottom: 3px solid #f78166;
  font-size: 17px;
  font-weight: 600;
}
.edit { width: 35px; height: 35px; margin-right: 20px; }
.markdown { padding: 40px; font-size: 19px; line-height: 30px; }
.markdown h2 { padding-bottom: 12px; border-bottom: 1px solid #2f353d; font-size: 38px; line-height: 50px; font-weight: 600; }
.markdown ul { margin: 20px 0; padding-left: 40px; }
.markdown p { margin-bottom: 20px; }
.markdown code {
  padding: 4px 6px;
  border-radius: 8px;
  background: #1f242b;
  font: 16px/20px "Liberation Mono", monospace;
}

/* Sidebar */
.sidebar h2 { font-size: 19px; line-height: 30px; font-weight: 600; }
.about { padding: 5px 0 20px; }
.about-head { display: flex; align-items: center; justify-content: space-between; }
.description { margin: 20px 0; color: #9198a1; font-size: 19px; line-height: 30px; font-style: italic; white-space: nowrap; }
.facts { display: grid; gap: 10px; list-style: none; color: #9198a1; }
.facts a { display: flex; align-items: center; gap: 14px; }
.block { padding: 21px 0 20px; border-top: 1px solid #2f353d; font-size: 14px; line-height: 22px; }
.block h2 { margin-bottom: 20px; }
.block p { color: #9198a1; }
.link { display: inline-block; border-bottom: 1px solid #4493f8; color: #4493f8; line-height: 20px; }
.languages { display: flex; gap: 3px; height: 10px; border-radius: 5px; overflow: hidden; }
.languages .html { background: #e34c26; }
.languages .js { flex: 1; background: #f1e05a; }
```
